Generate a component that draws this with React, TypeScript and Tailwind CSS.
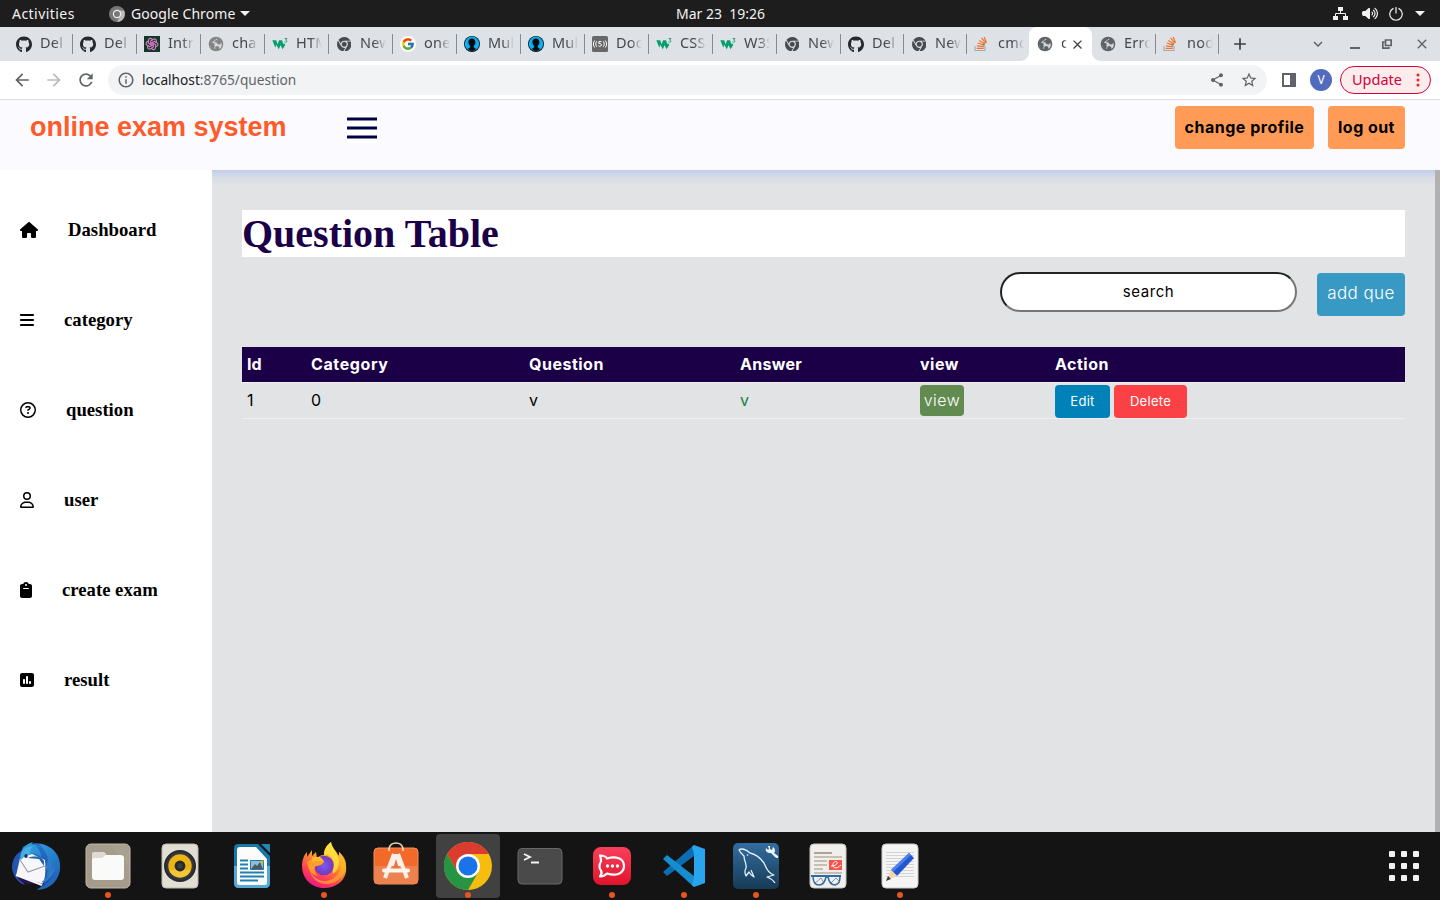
import React from "react";
import {
  MdAdd, MdArrowBack, MdArrowForward, MdClose, MdExpandMore, MdInfoOutline,
  MdPublic, MdRefresh, MdShare, MdStarBorder,
} from "react-icons/md";
import {
  FaHouse, FaBars, FaRegCircleQuestion, FaRegUser, FaClipboard,
  FaSquarePollVertical, FaGithub, FaChrome, FaVolumeHigh,
} from "react-icons/fa6";
import { FcGoogle } from "react-icons/fc";
import { TbBrandOpenai } from "react-icons/tb";

const W3 = () => (
  <svg viewBox="0 0 16 16" className="size-4">
    <path d="M.3 4.2h3.9l1.4 4 1.5-4h3l1.1 4 .8-1.1 1.2 2-2.6 4.2-2.1-4-1.7 4-2.5-4.6-.9 3.1L.3 4.2Z" fill="#04a06c" />
    <path d="M12.6 2.6H15l-1.2 1.5c1.4 0 1.5 2.2-.2 2.2-.5 0-.9-.3-1.1-.7" fill="none" stroke="#04a06c" strokeWidth=".9" />
  </svg>
);
const Stack = () => (
  <svg viewBox="0 0 16 16" className="size-4" fill="none">
    <path d="M1 10v4.5h10V10" stroke="#a3a8ad" strokeWidth="1.1" />
    <path d="M2.7 12.3h7M2.9 9.8l7 .9M3.7 7l6.7 2.1M5.2 4.4l5.9 3.7M7.5 1.9l4.3 5.3M10.2 1l2.3 5.8" stroke="#f4702a" strokeWidth="1.2" />
    <path d="m8.5 8.2 2.1.9" stroke="#28a06a" strokeWidth="1.1" />
  </svg>
);
const Silhouette = () => (
  <svg viewBox="0 0 16 16" className="size-4">
    <circle cx="8" cy="8" r="8" fill="#090f15" />
    <circle cx="8" cy="7.8" r="7.2" fill="#08b2f2" />
    <path d="M7.9 2.6c2.2 0 3.5 1.4 3.5 3.6 0 1.7-.7 3-1.9 3.7.1 1.6 1.4 2.2 2.5 2.9-1.2 2.7-6.8 2.7-8 0 1.1-.7 2.3-1.2 2.4-2.7C5.1 9.4 4.5 8 4.4 6.3 4.3 4.1 5.6 2.6 7.9 2.6Z" fill="#05090d" />
  </svg>
);
const Signal = () => (
  <svg viewBox="0 0 16 16" className="size-4">
    <rect width="16" height="16" rx="1.5" fill="#686868" />
    <g fill="none" stroke="#fff" strokeWidth="1">
      <path d="M2.7 4.5c-1.7 2-1.7 5 0 7M4.7 5.3c-1.2 1.6-1.2 3.8 0 5.4M13.3 4.5c1.7 2 1.7 5 0 7M11.3 5.3c1.2 1.6 1.2 3.8 0 5.4" />
      <path d="M9.4 5.6H6.9v2c2.9-.7 3.3 2.6.9 2.7-.6 0-1-.1-1.4-.5" />
    </g>
  </svg>
);
const OpenAI = () => (
  <span className="flex size-4 items-center justify-center bg-[#103a27]">
    <TbBrandOpenai className="size-3.5 text-[#dc78c8]" />
  </span>
);
const Git = () => <FaGithub className="size-[17px] text-[#24292f]" />;
const Chrome = () => <FaChrome className="size-[14.5px] text-[#484b4f]" />;
const GlobeShape = ({ fill }: { fill: string }) => (
  <svg viewBox="0 0 16 16" className="size-4">
    <circle cx="8" cy="8" r="7.3" fill={fill} />
    <path d="M9.5 2.2 8.8 4l-2 .7-.5 1.5 2.5.2.5 1.7 2.5.4 1.6-1.7c1 2.4.2 5-1.8 6.2l-.5-2-1.5-1-2.2.6-.3 2.6C4 13.4 1.8 11 2.1 8.2l3.3 1.4 1.4-.6-.6-1.8-2.4-.8Z" fill="#dee1e6" opacity="0.9" />
    <path d="M2 6.2 5.6 9l1.2 1-.5 2.2 1.2 2.2c-3.4 0-6-3.4-5.5-8.2Z" fill={fill} />
  </svg>
);
const Globe = () => <GlobeShape fill="#5f6368" />;
const PaleGlobe = () => <GlobeShape fill="#858585" />;
const Google = () => (
  <span className="flex size-4 items-center justify-center rounded-full bg-white"><FcGoogle className="size-3.5" /></span>
);

type Tab = { icon: React.FC; text: string; active?: boolean; narrow?: boolean; bare?: boolean };
const tabs: Tab[] = [
  { icon: Git, text: "Del" }, { icon: Git, text: "Del" }, { icon: OpenAI, text: "Intr" },
  { icon: PaleGlobe, text: "cha" }, { icon: W3, text: "HTM" }, { icon: Chrome, text: "New" },
  { icon: Google, text: "one" }, { icon: Silhouette, text: "Mul" }, { icon: Silhouette, text: "Mul" },
  { icon: Signal, text: "Doc" }, { icon: W3, text: "CSS" }, { icon: W3, text: "W3S" },
  { icon: Chrome, text: "New" }, { icon: Git, text: "Del", narrow: true },
  { icon: Chrome, text: "New", narrow: true }, { icon: Stack, text: "cmd", narrow: true, bare: true },
  { icon: Globe, text: "o", narrow: true, active: true }, { icon: Globe, text: "Erro", narrow: true },
  { icon: Stack, text: "nod", narrow: true },
];

function TabItem({ icon: Icon, text, active, narrow, bare }: Tab) {
  return (
    <div className={`relative flex h-[34px] shrink-0 items-center pl-2 ${narrow ? "w-[63px]" : "w-16"} ${active ? "z-10 rounded-t-lg bg-white" : ""}`}>
      {active && (
        <>
          <span className="absolute bottom-0 -left-2 size-2 bg-[radial-gradient(circle_at_0_0,#dee1e6_7.5px,#fff_8px)]" />
          <span className="absolute -right-2 bottom-0 size-2 bg-[radial-gradient(circle_at_100%_0,#dee1e6_7.5px,#fff_8px)]" />
        </>
      )}
      <span className="flex size-4 shrink-0 items-center justify-center"><Icon /></span>
      <span className={`ml-2 overflow-hidden pb-0.5 text-[14.5px] tracking-[0.2px] whitespace-nowrap text-[#45484c] [mask-image:linear-gradient(to_right,#000_55%,transparent)] ${active ? "w-1.5" : "w-[26px]"}`}>{text}</span>
      {active && <MdClose className="ml-[3px] size-[15px] shrink-0 text-[#3c4043]" />}
      {!active && !bare && <span className="absolute right-0 h-5 w-px translate-x-px bg-[#868a90]" />}
    </div>
  );
}

const navItems = [
  { icon: FaHouse, text: "Dashboard", size: "w-[18px]" },
  { icon: FaBars, text: "category", size: "w-[14px]" },
  { icon: FaRegCircleQuestion, text: "question", size: "w-4" },
  { icon: FaRegUser, text: "user", size: "w-[14px]" },
  { icon: FaClipboard, text: "create exam", size: "w-3" },
  { icon: FaSquarePollVertical, text: "result", size: "w-[14px]" },
];

const Thunderbird = () => (
  <svg viewBox="0 0 48 48" className="size-12">
    <defs>
      <linearGradient id="tb" x1="0" y1="0" x2="1" y2="1"><stop stopColor="#2c7fd6" /><stop offset=".5" stopColor="#2361bb" /><stop offset="1" stopColor="#263f9c" /></linearGradient>
      <linearGradient id="tw" x1="0" y1="0" x2=".7" y2="1"><stop stopColor="#35a9e4" /><stop offset="1" stopColor="#1c62b8" /></linearGradient>
    </defs>
    <path d="M11 5C22-2 39 1 46 14c5 11 1 24-10 31l-11 3 7-6-8-6L4 33l-1-9Z" fill="url(#tb)" />
    <path d="M9 9C2 13 0 20 0 26c1 8 6 15 13 17-4-4-6-9-6-15Z" fill="#2155ae" />
    <path d="M8 16 4 34l26 9c3-5 4-12 3-25L20 12Z" fill="#f7f7fb" />
    <path d="m8 18 8 12 17-6" fill="none" stroke="#9a9ca4" strokeWidth="1.1" />
    <path d="M4 33c4 7 8 9 13 9h15L17 38Z" fill="#271451" />
    <path d="m4 33 13 5 13 5" stroke="#f7f7fb" strokeWidth="2" fill="none" />
    <path d="M8 18C8 7 14 2 21 0l-2 2.5c10 0 17 8 17 17 0 9-1 15-5 22 9-5 14-12 14-22-1 15-9 23-20 28 14 1 23-11 23-22C48 12 39 3 27 2l7 8c-2-3-6-5-10-6 4 4 5 7 5 11-5-5-14-5-21 3Z" fill="url(#tw)" />
    <path d="M9 15c0-6 5-11 12-11-3 3-4 7-2 9-3-1-6 0-10 5Z" fill="#48afe3" />
    <path d="M16 16c7-3 14-1 16 3v5l-5-7Z" fill="#2464a9" />
    <path d="m37 17-3 11 5-7-2 14 5-10m-12 15c5-2 10-7 12-12" fill="none" stroke="#327fcb" strokeWidth="1.3" />
    <ellipse cx="14" cy="14" rx="1.7" ry="2" fill="#24364e" />
  </svg>
);
const Files = () => (
  <svg viewBox="0 0 48 48" className="size-12">
    <rect x="2" y="2" width="44" height="44" rx="5" fill="#a59c8b" stroke="#c1baaa" />
    <path d="M27 3h14l4 4v20Z" fill="#b4ab9a" opacity=".3" />
    <path d="M8 20v-8q0-2 2-2h9q2 0 3 2l1 4H10Z" fill="#dedbd2" />
    <path d="M10 16h8l4-3h14q4 0 4 3v19q0 3-3 3H11q-3 0-3-3V19q0-3 2-3Z" fill="#fafaf8" />
  </svg>
);
const Rhythmbox = () => (
  <svg viewBox="0 0 48 48" className="size-12">
    <rect x="6" y="2" width="36" height="44" rx="4" fill="#e2ded3" stroke="#bdb9ae" />
    <circle cx="24" cy="24" r="16" fill="#272a32" /><circle cx="24" cy="24" r="14" fill="#34363d" />
    <circle cx="24" cy="24" r="11.7" fill="#ebb314" /><path d="M13 28a12 12 0 0 0 22 0Z" fill="#f6cf4f" opacity=".65" />
    <circle cx="24" cy="24" r="5.4" fill="#24262a" /><circle cx="24" cy="24" r="2.8" fill="#393d43" />
  </svg>
);
const Writer = () => (
  <svg viewBox="0 0 48 48" className="size-12">
    <path d="M10 2h20l12 12v27q0 5-5 5H11q-5 0-5-5V7q0-5 4-5Z" fill="#1679aa" />
    <path d="M6 24h36v17q0 5-5 5H11q-5 0-5-5Z" fill="#55a9d7" />
    <path d="M12 5h16l11 12v24q0 2-2 2H11q-2 0-2-2V8q0-3 3-3Z" fill="#fcfcfd" />
    <path d="M33 2h9v9Z" fill="#2686b3" />
    <path d="M12 18.5h8m-8 4h8m-8 4h8m-8 4h24m-24 4h24m-24 4h18" stroke="#227fae" strokeWidth="2" />
    <path d="M22.5 18.5h13v9h-13Z" fill="#87c0df" stroke="#2476ab" />
    <path d="m23 27 4-5 2 2 3-4 3 7Z" fill="#53585b" /><circle cx="34" cy="20" r="1.5" fill="#e8b22c" />
  </svg>
);
const Firefox = () => (
  <svg viewBox="0 0 48 48" className="size-12">
    <defs>
      <linearGradient id="ff" x1=".8" y1="0" x2=".3" y2="1"><stop stopColor="#fff14f" /><stop offset=".4" stopColor="#ff9f22" /><stop offset=".75" stopColor="#ff4055" /><stop offset="1" stopColor="#e51685" /></linearGradient>
      <radialGradient id="fp"><stop stopColor="#7a5cf0" /><stop offset="1" stopColor="#7437bb" /></radialGradient>
    </defs>
    <path d="M31 0c1 5 4 8 8 14v-4c6 6 8 12 7 20-2 10-11 16-22 16C11 46 2 36 2 24c0-6 2-11 5-14v5l5-7v6l4-4 1 6c2-2 4-3 7-3 0-6 3-10 7-13Z" fill="url(#ff)" />
    <path d="M31 0c1 6 7 10 9 18 3 10-2 17-10 20-8 3-17-1-20-10 1 10 13 18 25 12 7-4 11-10 11-17 0-5-2-9-7-13v4C35 9 32 5 31 0Z" fill="#ffb52b" opacity=".65" />
    <path d="M31 0c0 7 7 10 8 20 0 5-2 9-6 12V19c0-4-5-7-9-6 0-6 3-10 7-13Z" fill="#ffe33e" opacity=".8" />
    <circle cx="24" cy="23.5" r="9.8" fill="url(#fp)" />
    <path d="M7 20c7-5 11-2 17 0-2 3-5 4-8 4-3 2-1 7 2 10-6-1-10-6-11-14Z" fill="#ff9c2b" />
    <path d="M12 15h8c3 2 4 4 4 5-3 0-7-2-12 0Z" fill="#fbb832" />
  </svg>
);
const Software = () => (
  <svg viewBox="0 0 48 48" className="size-12">
    <rect x="2" y="6" width="44" height="36" rx="4" fill="#f16a2c" stroke="#f58d5d" /><path d="M2 24h44v14q0 4-4 4H6q-4 0-4-4Z" fill="#ee8150" />
    <path d="M17 9V7c1-8 13-8 14 0v2" fill="none" stroke="#efddb0" strokeWidth="1.7" />
    <path d="m22 12-9 24M26 12l9 24" stroke="#f8efe9" strokeWidth="4" /><path d="M22 12h4l3 12H19Z" fill="#f8efe9" />
    <path d="m24 17-3 10h6Z" fill="#ef7139" /><path d="M12 28.5h24" stroke="#fff6ee" strokeWidth="4" strokeLinecap="round" />
  </svg>
);
const ChromeColor = () => (
  <svg viewBox="0 0 48 48" className="size-12">
    <circle cx="24" cy="24" r="24" fill="#f6bd0e" />
    <path d="M3.2 12A24 24 0 0 1 44.8 12H24L13.6 30Z" fill="#dc3b2f" />
    <path d="M3.2 12A24 24 0 0 0 24 48l10.4-18H13.6Z" fill="#269442" />
    <circle cx="24" cy="24" r="12" fill="#fff" /><circle cx="24" cy="24" r="9.5" fill="#1a73e8" />
  </svg>
);
const Terminal = () => (
  <svg viewBox="0 0 48 48" className="size-12"><rect x="2" y="6.5" width="44" height="35.5" rx="4" fill="#4a4a4a" stroke="#696969" /><path d="m8 12 6 3-6 3M15 20.5h8" fill="none" stroke="#f6f6f6" strokeWidth="1.8" /></svg>
);
const Rocket = () => (
  <svg viewBox="0 0 48 48" className="size-12">
    <defs><linearGradient id="rc" x2="0" y2="1"><stop stopColor="#fa405b" /><stop offset="1" stopColor="#df142c" /></linearGradient></defs>
    <rect x="5" y="5" width="38" height="38" rx="8" fill="url(#rc)" />
    <path d="M12 13.5c4 0 6 1 7 3 9-3 17 0 17 7.5s-8 10.500-17 7.500c-2 2-4 3-7 3 2-2 2-4 1-6-2-2-2-6 0-9 0-2 0-4-1-6Z" fill="none" stroke="#fff" strokeWidth="2.2" strokeLinejoin="round" />
    <g fill="#fff"><circle cx="19.500" cy="24" r="1.700" /><circle cx="24.500" cy="24" r="1.700" /><circle cx="29.500" cy="24" r="1.700" /></g>
  </svg>
);
const Code = () => (
  <svg viewBox="0 0 48 48" className="size-12">
    <path d="m3 30 4 4 27-20V3Z" fill="#0a6fb2" /><path d="m3 17 4-4 27 21v11Z" fill="#168dd0" />
    <path d="m34 3 11 4v34l-11 4-2-2 2-7V12l-2-7Z" fill="#29a5ed" />
  </svg>
);
const Workbench = () => (
  <svg viewBox="0 0 48 48" className="size-12">
    <defs><linearGradient id="mw" x2="0" y2="1"><stop stopColor="#326da0" /><stop offset="1" stopColor="#163b56" /></linearGradient></defs>
    <rect x="1" y="1" width="46" height="46" rx="5" fill="url(#mw)" />
    <path d="M43 41c-2-3-5-5-8-6l7-2c-7-2-8-8-10-12-5-7-9-9-14-10-4-4-9-5-11-3l2 3 3 3c0 5 3 8 2 12-2 4-1 6 0 8l3-4c1 2 3 4 5 5l-3-7" fill="none" stroke="#e4f2fa" strokeWidth="1.3" strokeLinejoin="round" />
    <circle cx="15.500" cy="13" r=".8" fill="#fff" />
    <path d="m36 4 2 0v3l2 1 1-3c3 2 2 5 1 6l4 3c1 2-1 3-3 1l-4-4c-4 0-6-2-5-5l2 2 1-1Z" fill="#eef4f7" />
  </svg>
);
const DocumentViewer = () => (
  <svg viewBox="0 0 48 48" className="size-12">
    <rect x="6" y="2" width="36" height="44" rx="4" fill="#f0efec" stroke="#c6c6c4" />
    <path d="M10 11h18" stroke="#afa493" strokeWidth="2" /><path d="M10 15h28M10 19h13m-13 4h13m-13 4h9m-9 4h28" stroke="#c6c0b4" strokeWidth="2" />
    <path d="M25 18h13v10H25Z" fill="#f65449" /><path d="M27 24c4 0 7-2 6-4-2-2-5 2-4 4 1 3 5 2 8-1" fill="none" stroke="#fff" />
    <path d="m10 42 7-6 3 5m6 1 6-6 4 4" fill="none" stroke="#7e858d" strokeWidth=".9" />
    <path d="M7 34h30" stroke="#2d6da9" strokeWidth="2" /><path d="M9 34c0 6 2 9 6 9s6-3 7-8h2c1 5 3 8 7 8 4-1 5-3 5-9" fill="none" stroke="#2d6da9" strokeWidth="1.5" />
  </svg>
);
const Editor = () => (
  <svg viewBox="0 0 48 48" className="size-12">
    <rect x="6" y="2" width="36" height="44" rx="4" fill="#f5f5f5" stroke="#c9c9c9" />
    <path d="M10 10.500h28m-28 3h28m-28 3h28m-28 3h28m-28 3h28m-28 3h28m-28 3h28m-28 3h28m-28 3h28" stroke="#d3d3d3" />
    <path d="m15 28 18-17 5 5-17 18Z" fill="#2257d1" /><path d="m15 28 18-17 2 2-18 17Z" fill="#4c83ed" /><path d="m11 38 4-10 6 6Z" fill="#f2d5ad" /><path d="m10 39 2-5 3 3Z" fill="#3e3a36" />
  </svg>
);

const apps = [
  { icon: Thunderbird }, { icon: Files, running: true }, { icon: Rhythmbox }, { icon: Writer },
  { icon: Firefox, running: true }, { icon: Software }, { icon: ChromeColor, running: true, focused: true },
  { icon: Terminal }, { icon: Rocket, running: true }, { icon: Code, running: true },
  { icon: Workbench, running: true }, { icon: DocumentViewer }, { icon: Editor, running: true },
];

const cols = "grid grid-cols-[64px_218px_211px_180px_135px_1fr] [&>*]:pl-[5px]";

export default function App() {
  return (
    <div className="flex h-[900px] w-[1440px] flex-col overflow-hidden bg-white font-['Noto_Sans',sans-serif]">
      <div className="grid h-[27px] shrink-0 grid-cols-[1fr_auto_1fr] items-center bg-[#1d1d1d] text-[14px] leading-[27px] text-[#f2f2f2]">
        <div className="flex items-center pl-3">
          <span className="w-[97px] tracking-[0.45px]">Activities</span>
          <svg viewBox="0 0 16 16" className="mr-1.5 size-4"><circle cx="8" cy="8" r="8" fill="#777" /><path d="M8 4.500h7A8 8 0 0 1 8 16l3.300-6Z" fill="#bbb" /><circle cx="8" cy="8" r="4.200" fill="#eee" /><circle cx="8" cy="8" r="3" fill="#777" /></svg>
          <span className="tracking-[0.08px]">Google Chrome</span>
          <svg viewBox="0 0 10 5" className="ml-[5px] h-[5px] w-2.5"><path d="M0 0h10L5 5Z" fill="#f2f2f2" /></svg>
        </div>
        <span className="pl-px whitespace-pre">Mar 23  19:26</span>
        <div className="flex items-center justify-end pr-[15px]">
          <svg viewBox="0 0 15 14" className="mr-3.5 h-3.5 w-[15px]"><path d="M5 0h5v4H5ZM0 9h5v4H0Zm10 0h5v4h-5Z" fill="#f2f2f2" /><path d="M7.500 4v3M2.500 9V6.500h10V9" fill="none" stroke="#f2f2f2" /></svg>
          <FaVolumeHigh className="mr-[11px] h-[13px] w-4" />
          <svg viewBox="0 0 14 14" className="mr-3 size-3.5" fill="none" stroke="#f2f2f2" strokeWidth="1.200"><path d="M4.500 1.400a6.200 6.200 0 1 0 5 0M7 0v6.500" /></svg>
          <svg viewBox="0 0 10 5" className="h-[5px] w-2.5"><path d="M0 0h10L5 5Z" fill="#f2f2f2" /></svg>
        </div>
      </div>

      <div className="flex h-[34px] shrink-0 items-center bg-[#dee1e6] pl-2">
        {tabs.map((tab, i) => <TabItem key={i} {...tab} />)}
        <MdAdd className="ml-3 size-5 text-[#3c4043]" />
        <div className="ml-auto flex items-center pr-2.5 text-[#5f6368]">
          <MdExpandMore className="mr-[23px] size-[18px]" />
          <span className="mt-2 mr-[22px] h-0.5 w-2.5 bg-[#5f6368]" />
          <svg viewBox="0 0 10 10" className="mr-[22px] size-2.5" fill="none" stroke="#5f6368" strokeWidth="1.700"><path d="M3.500 1h5.700v5.500H3.500ZM2.500 3H.8v6.200h6V8" /></svg>
          <MdClose className="size-4" />
        </div>
      </div>

      <div className="flex h-[39px] shrink-0 items-center border-b border-[#d9dbdf] bg-white pr-[9px] pl-3">
        <MdArrowBack className="mr-3 size-5 text-[#5f6368]" />
        <MdArrowForward className="mr-3 size-5 text-[#b9bbbe]" />
        <MdRefresh className="mr-3 size-5 text-[#5f6368]" />
        <div className="flex h-[30px] w-[1159px] items-center rounded-full bg-[#f1f3f4] px-[9px]">
          <MdInfoOutline className="mr-[7px] size-[18px] text-[#5f6368]" />
          <span className="text-[13.700px] text-[#202124]">localhost<span className="text-[#5f6368]">:8765/question</span></span>
          <MdShare className="mr-[15px] ml-auto size-4 text-[#5f6368]" />
          <MdStarBorder className="size-[18px] text-[#5f6368]" />
        </div>
        <span className="ml-[15px] h-3.5 w-3.5 border-2 border-r-[6px] border-[#5f6368]" />
        <span className="ml-3.5 flex size-[22px] items-center justify-center rounded-full bg-[#526bbd] text-xs text-white">V</span>
        <div className="ml-auto flex h-7 w-[91px] items-center rounded-full border border-[#d6003a] bg-[#fcecec] pl-[11px] text-[14.500px] text-[#d6003a]">
          Update
          <svg viewBox="0 0 4 14" className="ml-auto mr-2.5 h-3.5 w-1" fill="#e32636"><circle cx="2" cy="2" r="1.500" /><circle cx="2" cy="7" r="1.500" /><circle cx="2" cy="12" r="1.500" /></svg>
        </div>
      </div>

      <header className="flex h-[70px] shrink-0 items-start bg-[#fbfaff] pr-[35px] pl-[30px]">
        <h1 className="mt-1.5 w-[317px] font-['Liberation_Sans',sans-serif] text-[27px] leading-[42px] font-bold text-[#ff5a2a]">online exam system</h1>
        <button className="mt-[13px] size-[30px] bg-white">
          <svg viewBox="0 0 30 30" className="size-[30px]"><path d="M0 6h30M0 15h30M0 24h30" stroke="#000047" strokeWidth="3" /></svg>
        </button>
        <div className="mt-1.5 ml-auto flex gap-3.5 font-['Inter',sans-serif] text-base font-bold text-black">
          <button className="h-[43px] w-[139px] rounded bg-[#ff9b57] pb-0.5 tracking-[0.500px] whitespace-nowrap">change profile</button>
          <button className="h-[43px] w-[77px] rounded bg-[#ff9b57] pb-0.5 tracking-[0.450px] whitespace-nowrap">log out</button>
        </div>
      </header>

      <div className="flex h-[662px] shrink-0">
        <nav className="w-[212px] shrink-0 bg-white pt-[15px] pl-5 font-['Liberation_Serif',serif] text-[18.720px] font-bold text-black">
          {navItems.map(({ icon: Icon, text, size }) => (
            <a key={text} className="flex h-[90px] items-center gap-[30px]">
              <Icon className={`h-4 shrink-0 ${size}`} /><span>{text}</span>
            </a>
          ))}
        </nav>
        <main className="flex-1 bg-[#e2e3e5] bg-[linear-gradient(to_bottom,#c0cdeb,#d9dde7_8px,#e2e3e5_15px)] px-[30px] pt-10 font-['Inter',sans-serif]">
          <h2 className="h-[47px] bg-white font-['Liberation_Serif',serif] text-[40px] leading-[48px] font-bold text-[#1b0047]">Question Table</h2>
          <div className="mt-[15px] flex justify-end gap-5">
            <div className="flex h-10 w-[297px] items-center justify-center rounded-[20px] border-2 border-t-[#222] border-r-[#767676] border-b-[#767676] border-l-[#222] bg-white text-[15px] tracking-[0.600px] text-black">search</div>
            <button className="mt-px h-[43px] w-[88px] rounded bg-[#3899c4] pb-0.5 text-[17px] font-light tracking-[0.400px] whitespace-nowrap text-white">add que</button>
          </div>
          <div className="mt-[31px]">
            <div className={`${cols} h-[35px] items-center bg-[#1b0047] pb-0.5 text-base font-bold text-white`}>
              <span>Id</span><span className="tracking-[0.600px]">Category</span><span className="tracking-[0.500px]">Question</span><span className="tracking-[0.300px]">Answer</span><span className="tracking-[0.500px]">view</span><span className="tracking-[0.500px]">Action</span>
            </div>
            <div className={`${cols} h-[37px] items-center border-y border-[#f0f0f1] text-base text-black`}>
              <span className="pb-0.5">1</span><span className="pb-0.5">0</span><span className="pb-0.5">v</span><span className="pb-0.5 text-[#14813b]">v</span>
              <span><span className="flex h-[31px] w-11 items-center justify-center rounded-sm bg-[#618b50] pb-0.5 font-light tracking-[0.500px] text-white">view</span></span>
              <span className="mt-[2px] flex h-[33px] gap-1 text-[13px] tracking-[0.300px] text-white">
                <button className="w-[55px] rounded bg-[#0081b8]">Edit</button>
                <button className="w-[73px] rounded bg-[#fb4145]">Delete</button>
              </span>
            </div>
          </div>
        </main>
        <div className="w-[5px] bg-[#b1b1b1]" />
      </div>

      <footer className="flex h-[68px] shrink-0 items-center gap-2 bg-[#141414]">
        {apps.map(({ icon: Icon, running, focused }, i) => (
          <div key={i} className={`relative flex h-16 w-16 items-center justify-center rounded first:ml-1 ${focused ? "bg-[#414141]" : ""}`}>
            <Icon />
            {running && <span className="absolute bottom-0 size-1.5 rounded-full bg-[#e95420]" />}
          </div>
        ))}
        <div className="mr-[21px] ml-auto grid grid-cols-3 gap-1.5">
          {Array.from({ length: 9 }, (_, i) => <span key={i} className="size-1.5 rounded-[1px] bg-[#f2f2f2]" />)}
        </div>
      </footer>
    </div>
  );
}
